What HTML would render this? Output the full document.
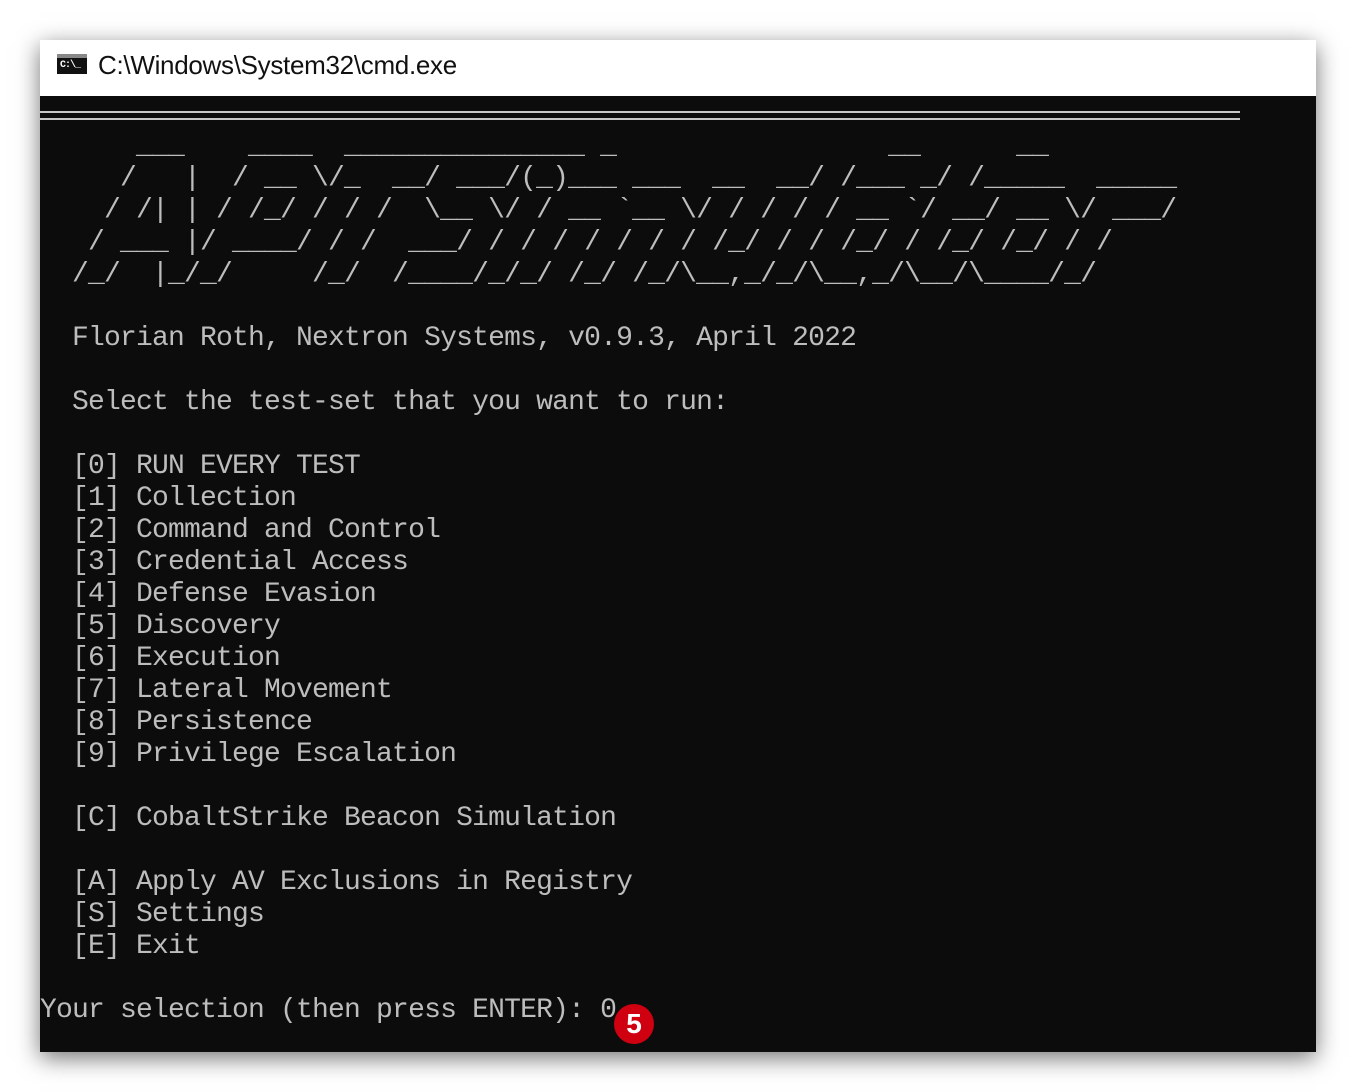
<!DOCTYPE html>
<html><head><meta charset="utf-8"><style>
html,body{margin:0;padding:0;background:#fff;width:1356px;height:1092px;overflow:hidden;position:relative;}
.win{position:absolute;left:40px;top:40px;width:1276px;height:1012px;background:#0c0c0c;box-shadow:0 6px 22px rgba(0,0,0,.55);}
.tb{position:absolute;left:0;top:0;width:1276px;height:56px;background:#fff;}
.tt{position:absolute;left:58px;top:10px;font:26px "Liberation Sans",sans-serif;color:#111;letter-spacing:-0.3px;}
.ic{position:absolute;left:17px;top:14px;width:30px;height:20px;background:#111;border-top:4px solid #888;box-sizing:border-box;}
.ic span{position:absolute;left:3px;top:2px;font:bold 10px "Liberation Mono",monospace;color:#fff;letter-spacing:-1px;}
pre{position:absolute;left:0;top:59px;margin:0;font-family:"Liberation Mono",monospace;font-size:28px;letter-spacing:-0.8px;line-height:32px;color:#bdbdbd;white-space:pre;}
.dl{position:absolute;left:0;width:1200px;height:2px;background:#c6c6c6;}
.badge{position:absolute;left:614px;top:1004px;width:40px;height:40px;border-radius:50%;background:#cf0010;color:#fff;font:bold 28px "Liberation Sans",sans-serif;text-align:center;line-height:40px;}
</style></head><body>
<div class="win">
<div class="tb"><div class="ic"><span>C:\_</span></div><div class="tt">C:\Windows\System32\cmd.exe</div></div>
<div class="dl" style="top:71px"></div>
<div class="dl" style="top:78px"></div>
<pre>

      ___    ____  _______________ _                 __      __
     /   |  / __ \/_  __/ ___/(_)___ ___  __  __/ /___ _/ /_____  _____
    / /| | / /_/ / / /  \__ \/ / __ `__ \/ / / / / __ `/ __/ __ \/ ___/
   / ___ |/ ____/ / /  ___/ / / / / / / / /_/ / / /_/ / /_/ /_/ / /
  /_/  |_/_/     /_/  /____/_/_/ /_/ /_/\__,_/_/\__,_/\__/\____/_/

  Florian Roth, Nextron Systems, v0.9.3, April 2022

  Select the test-set that you want to run:

  [0] RUN EVERY TEST
  [1] Collection
  [2] Command and Control
  [3] Credential Access
  [4] Defense Evasion
  [5] Discovery
  [6] Execution
  [7] Lateral Movement
  [8] Persistence
  [9] Privilege Escalation

  [C] CobaltStrike Beacon Simulation

  [A] Apply AV Exclusions in Registry
  [S] Settings
  [E] Exit

Your selection (then press ENTER): 0</pre>
</div>
<div class="badge">5</div>
</body></html>
